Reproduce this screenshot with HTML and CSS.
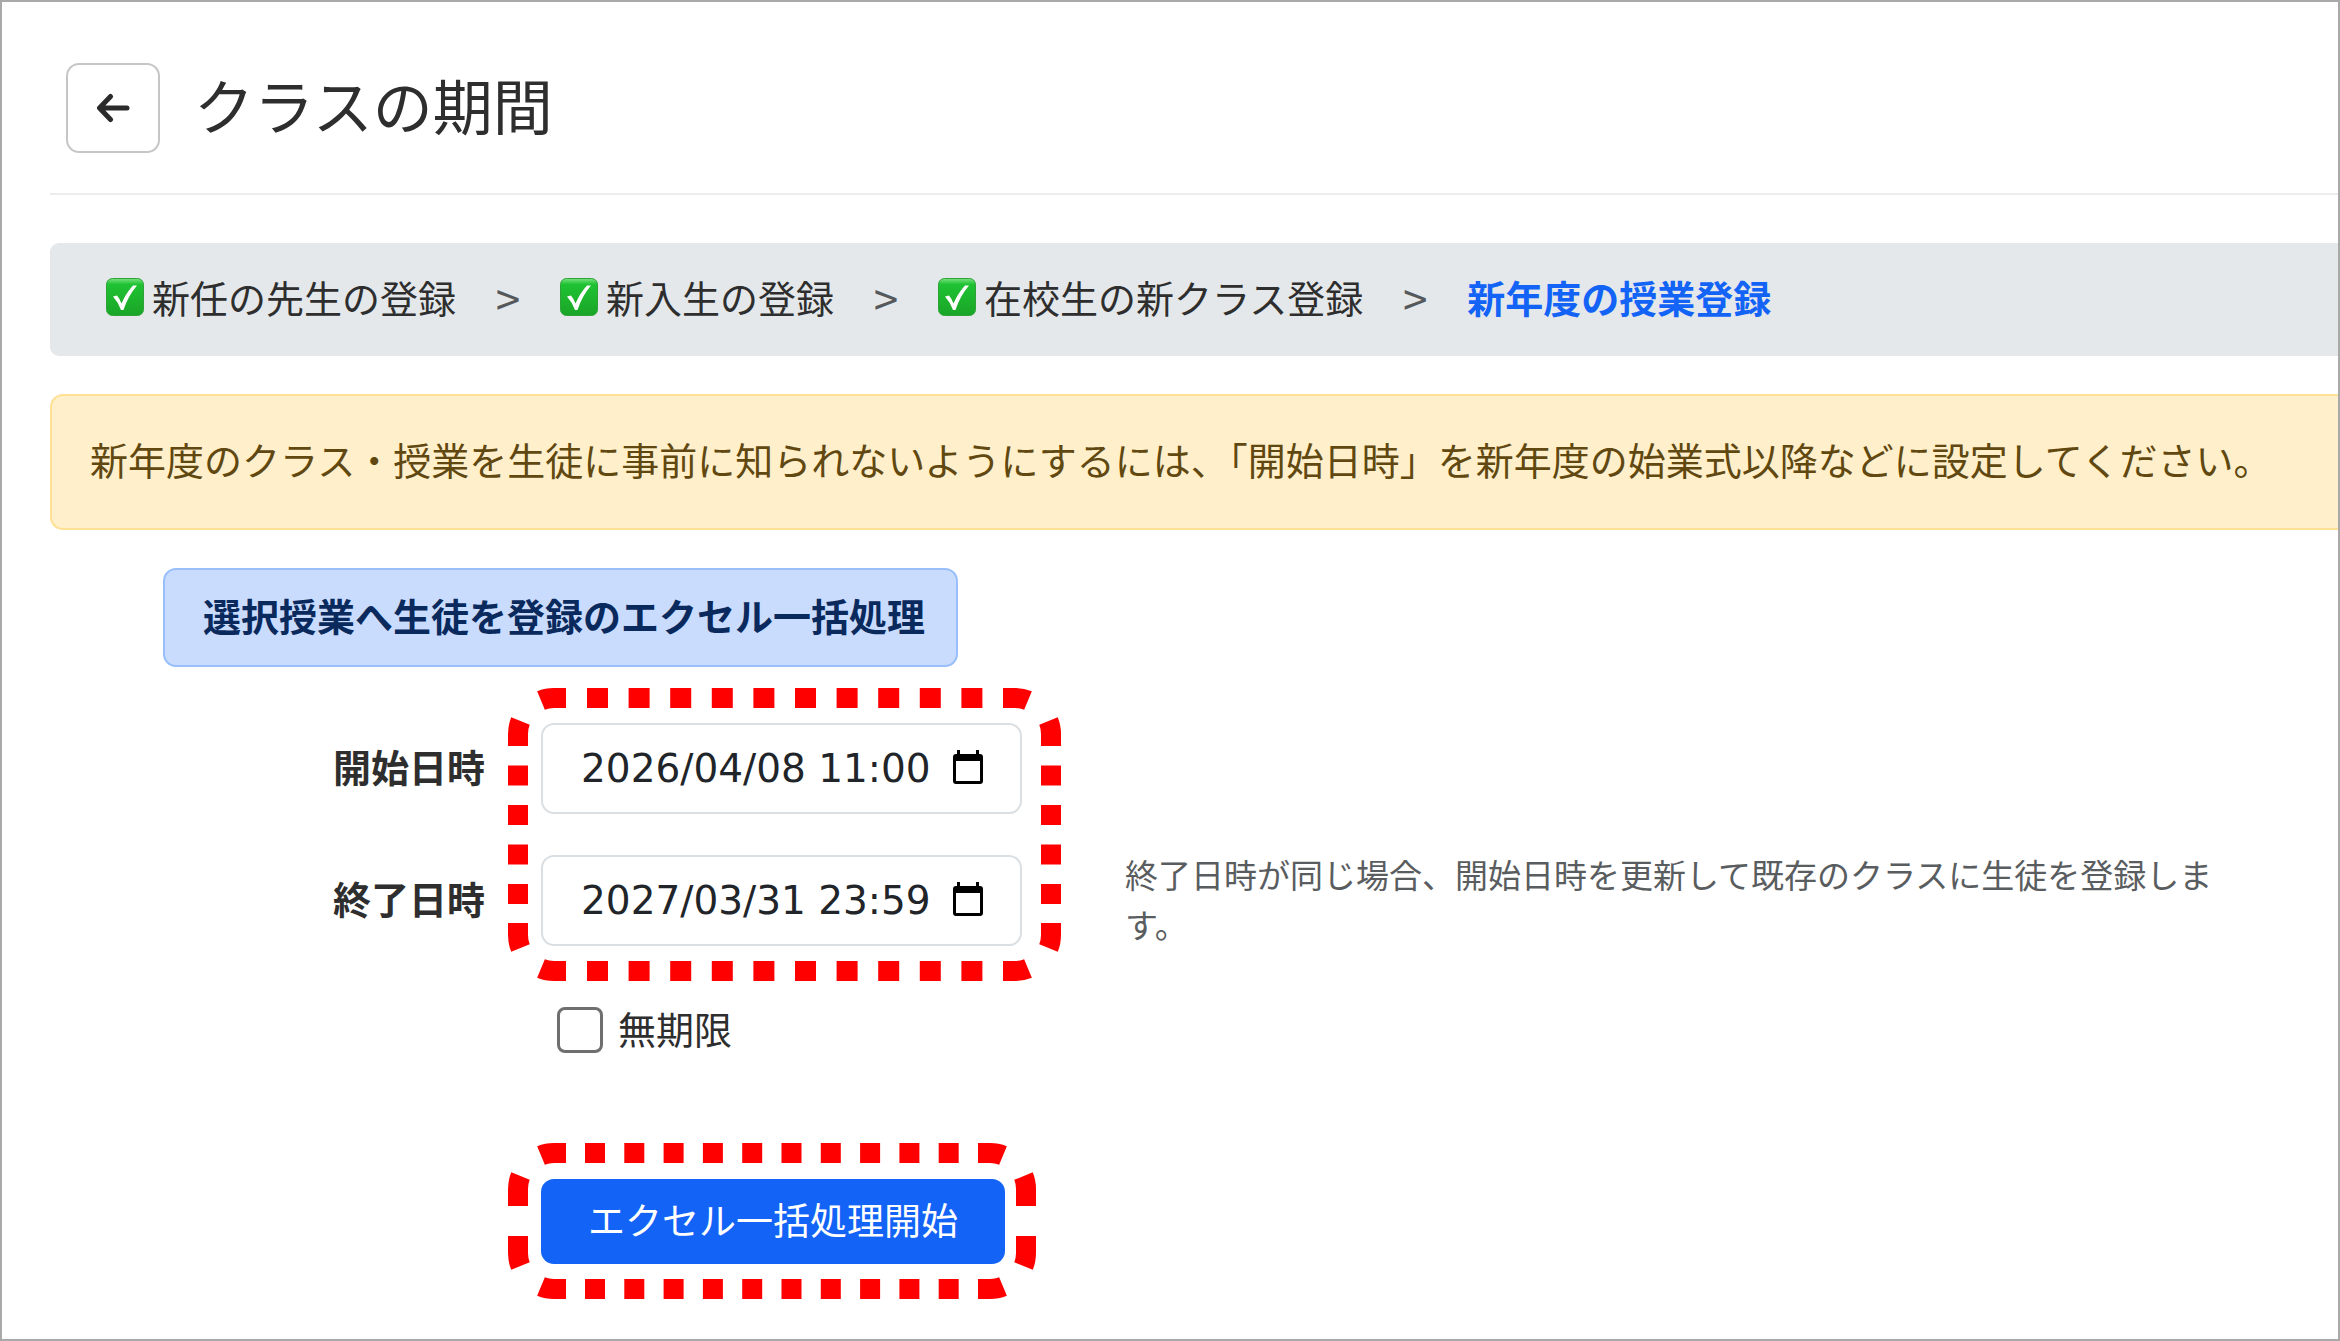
FILE: index.html
```html
<!DOCTYPE html>
<html lang="ja">
<head>
    <meta charset="UTF-8">
    <meta name="viewport" content="width=device-width, initial-scale=1.0">
    <title>クラスの期間</title>
    <link rel="stylesheet" href="styles.css">
</head>
<body>
    <svg class="defs" width="0" height="0" aria-hidden="true">
        <defs>
            <linearGradient id="checkFill" x1="0" y1="0" x2="0" y2="1">
                <stop offset="0" stop-color="#7be27f"/>
                <stop offset="0.16" stop-color="#1fc233"/>
                <stop offset="1" stop-color="#1aa527"/>
            </linearGradient>
        </defs>
        <symbol id="check" viewBox="0 0 38 38">
            <rect x="0.5" y="0.5" width="37" height="37" rx="6" fill="url(#checkFill)" stroke="#2fa338"/>
            <path d="M7 18.5 L11 17.5 Q14 21 15.5 25.5 Q20 15 27 7.5 L31 7.5 Q22 18 17.5 32 L15 32 Q12 24 7 18.5 Z" fill="#fff"/>
        </symbol>
        <symbol id="calendar" viewBox="0 0 30 34">
            <path d="M4 0h3v4h16V0h3v4h1a3 3 0 0 1 3 3v24a3 3 0 0 1-3 3H3a3 3 0 0 1-3-3V7a3 3 0 0 1 3-3h1z M3 11v20h24V11z" fill="#000" fill-rule="evenodd"/>
        </symbol>
    </svg>

    <main class="page">
        <header class="page-header">
            <button class="back-button" type="button" aria-label="戻る">
                <svg width="34" height="30" viewBox="0 0 34 30" fill="none" stroke="#2b2b2b" stroke-width="5" stroke-linecap="round" stroke-linejoin="round">
                    <path d="M31 15H4M14.500 3.500L3.500 15l11 11.500"/>
                </svg>
            </button>
            <h1>クラスの期間</h1>
        </header>

        <nav aria-label="年度更新の手順">
            <ol class="steps">
                <li><svg class="check"><use href="#check"/></svg>新任の先生の登録</li>
                <li><svg class="check"><use href="#check"/></svg>新入生の登録</li>
                <li><svg class="check"><use href="#check"/></svg>在校生の新クラス登録</li>
                <li><a href="#" aria-current="step">新年度の授業登録</a></li>
            </ol>
        </nav>

        <p class="notice">新年度のクラス・授業を生徒に事前に知られないようにするには、「開始日時」を新年度の始業式以降などに設定してください。</p>

        <h2 class="form-title">選択授業へ生徒を登録のエクセル一括処理</h2>

        <form class="form">
            <div class="period">
                <div class="row">
                    <label class="row-label" for="startAt">開始日時</label>
                    <div class="date-field">
                        <input id="startAt" type="text" value="2026/04/08 11:00">
                        <button type="button" aria-label="開始日時を選択"><svg width="30" height="34"><use href="#calendar"/></svg></button>
                    </div>
                </div>
                <div class="row">
                    <label class="row-label" for="endAt">終了日時</label>
                    <div class="date-field">
                        <input id="endAt" type="text" value="2027/03/31 23:59">
                        <button type="button" aria-label="終了日時を選択"><svg width="30" height="34"><use href="#calendar"/></svg></button>
                    </div>
                    <p class="hint">終了日時が同じ場合、開始日時を更新して既存のクラスに生徒を登録します。</p>
                </div>
                <svg class="marker marker-period" width="553" height="293" viewBox="0 0 553 293" aria-hidden="true">
                    <path d="M33 12.500Q39 10 46 10H58M495 10H507Q514 10 520 12.500M33 280.500Q39 283 46 283H58M495 283H507Q514 283 520 280.500"/>
                    <path d="M12.500 33Q10 39 10 46V58M10 235V247Q10 254 12.500 260M540.500 33Q543 39 543 46V58M543 235V247Q543 254 540.500 260"/>
                    <path d="M79 10H474.500M79 283H474.500" stroke-dasharray="21 20.600"/>
                    <path d="M10 77.500V216M543 77.500V216" stroke-dasharray="20 19.500"/>
                </svg>
            </div>

            <div class="row">
                <div class="unlimited">
                    <input id="unlimited" type="checkbox">
                    <label for="unlimited">無期限</label>
                </div>
            </div>

            <div class="row actions">
                <button class="submit-button" type="button">エクセル一括処理開始</button>
                <svg class="marker marker-submit" width="528" height="156" viewBox="0 0 528 156" aria-hidden="true">
                    <path d="M33 12.500Q39 10 46 10H58M470 10H482Q489 10 495 12.500M33 143.500Q39 146 46 146H58M470 146H482Q489 146 495 143.500"/>
                    <path d="M12.500 33Q10 39 10 46V63M10 93V110Q10 117 12.500 123M515.500 33Q518 39 518 46V63M518 93V110Q518 117 515.500 123"/>
                    <path d="M77 10H451M77 146H451" stroke-dasharray="20 19.300"/>
                </svg>
            </div>
        </form>
    </main>
</body>
</html>
```
FILE: styles.css
```css
* {
    box-sizing: border-box;
}

body {
    margin: 0;
    min-height: 100vh;
    border: 2px solid #a9a9a9;
    font-family: "Noto Sans CJK JP", sans-serif;
    font-size: 38px;
    line-height: 56px;
    color: #2e2e2e;
    background-color: #fff;
}

h1, h2, p, ol {
    margin: 0;
    padding: 0;
}

button, input {
    font: inherit;
}

button {
    cursor: pointer;
}

.defs {
    position: absolute;
}

.page {
    padding: 61px 0 40px 48px;
}

.page-header {
    display: flex;
    align-items: center;
    gap: 34px;
    padding: 0 16px 40px;
    border-bottom: 2px solid #ececec;
}

.page-header h1 {
    padding-bottom: 8px;
    font-size: 60px;
    font-weight: 400;
    line-height: 80px;
}

.back-button {
    display: flex;
    align-items: center;
    justify-content: center;
    width: 94px;
    height: 90px;
    padding: 0;
    border: 2px solid #c6c6c6;
    border-radius: 13px;
    background-color: #fff;
}

/* 手順 */
.steps {
    display: flex;
    margin-top: 48px;
    padding: 26px 56px 31px;
    border-radius: 9px 0 0 9px;
    list-style: none;
    background-color: #e4e8eb;
}

.steps li {
    display: flex;
    align-items: center;
}

.steps li + li::before {
    content: ">";
    width: 104px;
    font-size: 44px;
    text-align: center;
    color: #55595c;
}

.steps a {
    font-weight: 700;
    color: #1263f6;
    text-decoration: none;
}

.check {
    width: 38px;
    height: 38px;
    margin-right: 8px;
}

.notice {
    margin-top: 38px;
    padding: 35px 38px 41px;
    border: 2px solid #ffe094;
    border-right: 0;
    border-radius: 13px 0 0 13px;
    color: #604810;
    background-color: #ffefca;
}

.form-title {
    width: fit-content;
    margin: 38px 0 56px 113px;
    padding: 17px 31px 22px 38px;
    border: 2px solid #98bffb;
    border-radius: 13px;
    font-size: 38px;
    font-weight: 700;
    color: #0a2a5e;
    background-color: #c9dcfd;
}

/* フォーム */
.period {
    position: relative;
    display: grid;
    gap: 41px;
}

.row {
    display: grid;
    grid-template-columns: 435px 481px 1fr;
    column-gap: 56px;
    align-items: center;
}

.row-label {
    padding-bottom: 6px;
    font-weight: 700;
    text-align: right;
}

.date-field {
    display: flex;
    align-items: center;
    height: 91px;
    padding: 0 37px 0 38px;
    border: 2px solid #dadfe3;
    border-radius: 13px;
}

.date-field input {
    flex: 1;
    min-width: 0;
    padding: 0;
    border: 0;
    outline: 0;
    font-family: "DejaVu Sans", sans-serif;
    font-size: 39px;
    color: #212529;
    background: none;
}

.date-field button {
    display: flex;
    padding: 0 0 4px;
    border: 0;
    background: none;
}

.hint {
    margin: -8px 0;
    padding: 0 104px 4px 47px;
    font-size: 33px;
    line-height: 50px;
    color: #5a5d60;
}

.unlimited {
    grid-column: 2;
    display: flex;
    align-items: center;
    gap: 15px;
    margin-top: 54px;
    padding-left: 16px;
}

.unlimited label {
    padding-bottom: 4px;
}

.unlimited input {
    appearance: none;
    width: 46px;
    height: 46px;
    margin: 0;
    border: 3px solid #6f6f6f;
    border-radius: 8px;
    background-color: #fff;
}

.unlimited input:checked {
    background-color: #1263f6;
}

.actions {
    position: relative;
    margin-top: 119px;
}

.submit-button {
    grid-column: 2;
    justify-self: start;
    height: 85px;
    padding: 0 47px 5px;
    border: 0;
    border-radius: 13px;
    font-size: 37px;
    color: #fff;
    background-color: #1263f6;
}

/* 赤い点線の囲み */
.marker {
    position: absolute;
    left: 458px;
    fill: none;
    stroke: #f00;
    stroke-width: 20px;
    pointer-events: none;
}

.marker-period {
    top: -35px;
}

.marker-submit {
    top: -36px;
}
```
